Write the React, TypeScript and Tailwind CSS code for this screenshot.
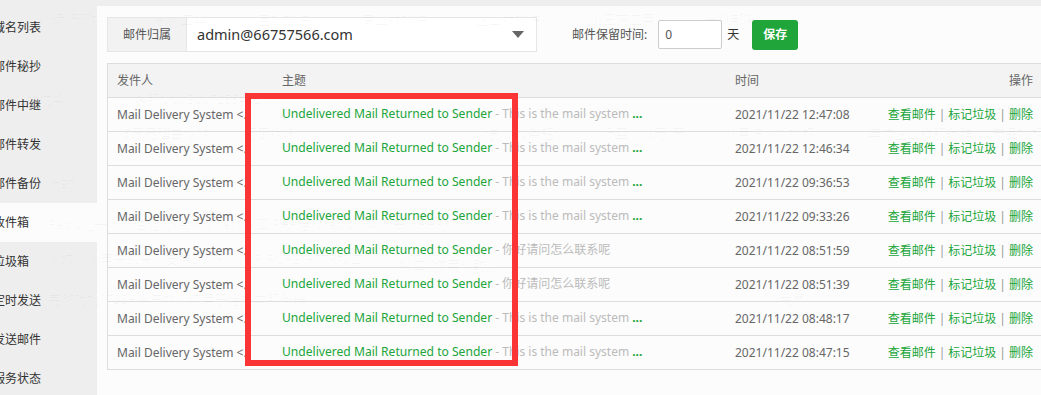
import React from 'react';

const FONT = '"Segoe UI", "Noto Sans", "Noto Sans CJK SC", sans-serif';

const MENU = ['域名列表', '邮件秘抄', '邮件中继', '邮件转发', '邮件备份', '收件箱', '垃圾箱', '定时发送', '发送邮件', '服务状态'];

type Mail = { time: string; preview: string; more: boolean };

const MAILS: Mail[] = [
  { time: '2021/11/22 12:47:08', preview: 'This is the mail system ', more: true },
  { time: '2021/11/22 12:46:34', preview: 'This is the mail system ', more: true },
  { time: '2021/11/22 09:36:53', preview: 'This is the mail system ', more: true },
  { time: '2021/11/22 09:33:26', preview: 'This is the mail system ', more: true },
  { time: '2021/11/22 08:51:59', preview: '你好请问怎么联系呢', more: false },
  { time: '2021/11/22 08:51:39', preview: '你好请问怎么联系呢', more: false },
  { time: '2021/11/22 08:48:17', preview: 'This is the mail system ', more: true },
  { time: '2021/11/22 08:47:15', preview: 'This is the mail system ', more: true },
];

// faint text of the window behind, showing through the page
const GHOSTS: { x: number; y: number; t: string }[] = [
  { x: 52, y: 10, t: '运行环境' },
  { x: 155, y: 10, t: '系统工具' },
  { x: 258, y: 10, t: '宝塔插件' },
  { x: 362, y: 10, t: '专业版插件' },
  { x: 476, y: 10, t: '企业版插件' },
  { x: 590, y: 10, t: '第三方应用' },
  { x: 705, y: 10, t: '一键部署' },
  { x: 0, y: 90, t: '企业版优势' },
  { x: 134, y: 90, t: '客服QQ: 3007255432' },
  { x: 104, y: 124, t: '✓ 15天无理由退款' },
  { x: 232, y: 124, t: '✓ 可更换IP' },
  { x: 460, y: 124, t: '✓ 赠送1000条短信' },
  { x: 590, y: 124, t: '✓ 低至1.06元/天' },
  { x: 712, y: 124, t: '✓ 商用防火墙授权' },
  { x: 856, y: 124, t: '✓ 年付企业版服务群' },
  { x: 980, y: 124, t: '✓ 产品授权' },
  { x: 48, y: 176, t: '说明' },
  { x: 48, y: 215, t: 'Redis是一个高性能的key-value数据库(PHP连接redis，需要安装PHP扩展)' },
  { x: 48, y: 250, t: '多域，多用户邮局，支持SMTP/IMAP/POP3/HTTP接口' },
  { x: 400, y: 256, t: '接口 [使用帮助]' },
  { x: 48, y: 290, t: '完整功能的SSH客户端，仅用于连接本服务器' },
  { x: 780, y: 290, t: '免费' },
];

function Sidebar() {
  return (
    <aside className="w-[97px] flex-none pt-[8px]">
      {MENU.map((item) => (
        <div
          key={item}
          className={`flex h-[39px] items-center overflow-hidden text-[12px] text-[#333] ${item === '收件箱' ? 'bg-[#fcfcfc]' : ''}`}
        >
          <span className="-ml-[7px] whitespace-nowrap">{item}</span>
        </div>
      ))}
    </aside>
  );
}

function Filters() {
  return (
    <div className="flex items-center">
      <div className="flex h-[35px] w-[430px] border border-[#e6e6e6] bg-white">
        <span className="flex w-[79px] flex-none items-center justify-center border-r border-[#e6e6e6] bg-[#f2f2f2] text-[12px] text-[#555]">
          邮件归属
        </span>
        <div className="flex flex-1 items-center justify-between pl-[10px] pr-[12px]">
          <span className="text-[14.5px] text-[#333]">admin@66757566.com</span>
          <svg width="12" height="7" viewBox="0 0 12 7" aria-hidden>
            <path d="M0 0h12L6 7z" fill="#666" />
          </svg>
        </div>
      </div>
      <span className="ml-[35px] text-[12px] text-[#555]">邮件保留时间:</span>
      <div className="ml-[11px] flex h-[29px] w-[64px] items-center rounded-[2px] border border-[#ccc] bg-white pl-[6px] text-[12px] text-[#555]">
        0
      </div>
      <span className="ml-[5px] text-[12px] text-[#333]">天</span>
      <button className="ml-[13px] h-[30px] w-[46px] rounded-[3px] bg-[#20a53a] text-[12px] font-bold text-white">保存</button>
    </div>
  );
}

function MailTable() {
  return (
    <div className="mt-[11px] w-[936px] border border-[#ddd] bg-[#fcfcfc] text-[12px]">
      <div className="grid h-[33px] grid-cols-[166px_452px_1fr_auto] items-center bg-[#f3f3f3] pr-[9px] text-[#666]">
        <span className="pl-[9px]">发件人</span>
        <span className="pl-[8px]">主题</span>
        <span className="pl-[9px]">时间</span>
        <span>操作</span>
      </div>
      {MAILS.map((m) => (
        <div key={m.time} className="grid h-[34px] grid-cols-[166px_452px_1fr_auto] items-center border-t border-[#ddd] pr-[9px]">
          <span className="truncate pl-[9px] text-[#666]">Mail Delivery System &lt;..</span>
          <span className="whitespace-nowrap pl-[8px]">
            <span className="text-[12.1px] text-[#20a53a]">Undelivered Mail Returned to Sender</span>
            <span className="text-[#bbb]"> - {m.preview}</span>
            {m.more && <span className="font-bold text-[#20a53a]">...</span>}
          </span>
          <span className="pl-[9px] text-[#666]">{m.time}</span>
          <span className="whitespace-nowrap text-[#20a53a]">
            查看邮件<span className="px-[3px] text-[#999]">|</span>标记垃圾<span className="px-[3px] text-[#999]">|</span>删除
          </span>
        </div>
      ))}
    </div>
  );
}

export default function App() {
  return (
    <div className="relative h-[395px] w-[1041px] overflow-hidden bg-[#eeeeee]" style={{ fontFamily: FONT }}>
      <div className="flex h-full">
        <Sidebar />
        <main className="mt-[6px] flex-1 bg-[#fcfcfc] pl-[10px] pt-[11px]">
          <Filters />
          <MailTable />
        </main>
      </div>

      {GHOSTS.map((g) => (
        <span
          key={g.t}
          className="pointer-events-none absolute whitespace-nowrap text-[13px] text-black/[0.03]"
          style={{ left: g.x, top: g.y }}
        >
          {g.t}
        </span>
      ))}

      <div className="pointer-events-none absolute left-[245px] top-[93px] h-[273px] w-[273px] border-[6px] border-[#fb3535]" />
    </div>
  );
}
